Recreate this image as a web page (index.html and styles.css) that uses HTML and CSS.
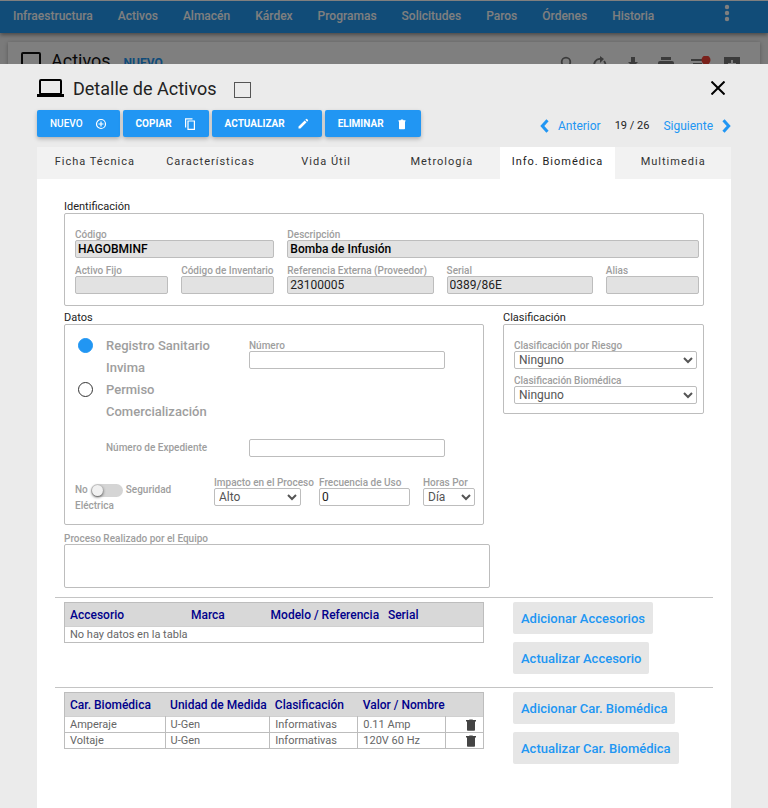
FILE: index.html
```html
<!DOCTYPE html>
<html lang="es">
<head>
<meta charset="utf-8">
<meta name="viewport" content="width=device-width, initial-scale=1">
<title>Detalle de Activos</title>
<link rel="stylesheet" href="styles.css">
</head>
<body>
<header class="navbar">
  <nav class="nav-links">
    <a href="#">Infraestructura</a>
    <a href="#">Activos</a>
    <a href="#">Almacén</a>
    <a href="#">Kárdex</a>
    <a href="#">Programas</a>
    <a href="#">Solicitudes</a>
    <a href="#">Paros</a>
    <a href="#">Órdenes</a>
    <a href="#">Historia</a>
  </nav>
  <button class="icon-button nav-more" type="button" aria-label="Más opciones">
    <svg width="6" height="18" viewBox="0 0 6 18" fill="currentColor"><circle cx="3" cy="3" r="2.2"/><circle cx="3" cy="9" r="2.2"/><circle cx="3" cy="15" r="2.2"/></svg>
  </button>
</header>
<main class="page-card">
  <div class="page-title">
    <svg width="28" height="20" viewBox="0 0 28 20"><rect x="2" y="2" width="18" height="14" rx="1" fill="none" stroke="currentColor" stroke-width="2"/><path d="M0 17h24v2H0z" fill="currentColor"/></svg>
    <h1>Activos</h1>
    <a href="#">NUEVO</a>
  </div>
  <div class="page-tools">
    <svg viewBox="0 0 16 16"><circle cx="7" cy="6" r="4.3" fill="none" stroke="currentColor" stroke-width="1.8"/><path d="M10 9l5 5" stroke="currentColor" stroke-width="2"/></svg>
    <svg viewBox="0 0 16 16"><path d="M3 12A6 6 0 0 1 9 3M12 5a6 6 0 0 1 1 6" fill="none" stroke="currentColor" stroke-width="1.8"/><path d="M8 0l4 3-4 4z" fill="currentColor"/></svg>
    <svg viewBox="0 0 16 16"><path d="M6 1h4v5h3l-5 5-5-5h3zM3 13h10v2H3z" fill="currentColor"/></svg>
    <svg viewBox="0 0 16 16"><path d="M3 1h10v3H3zM2 5h12a2 2 0 0 1 2 2v5h-3v3H3v-3H0V7a2 2 0 0 1 2-2z" fill="currentColor"/></svg>
    <svg viewBox="0 0 20 16" class="tool-wide"><path d="M0 3h11v2H0zM2 7h9v2H2zM4 11h6v2H4z" fill="currentColor"/><circle cx="15" cy="4" r="4.5" fill="#f44336"/></svg>
    <svg viewBox="0 0 16 16"><path fill-rule="evenodd" d="M0 1h16v14H0zM7 4v3H4v2h3v3h2V9h3V7H9V4z" fill="currentColor"/></svg>
  </div>
</main>
<div class="backdrop"></div>

<section class="sheet" role="dialog" aria-labelledby="sheet-title">
  <div class="sheet-head">
    <svg class="laptop" width="27" height="18" viewBox="0 0 27 18"><rect x="3" y="1" width="21" height="14" rx="1" fill="none" stroke="currentColor" stroke-width="2"/><path d="M0 15h27v3H0zM3 14h21v2H3z" fill="currentColor"/></svg>
    <h2 id="sheet-title">Detalle de Activos</h2>
    <input class="square" type="checkbox" aria-label="Seleccionar activo">
    <button class="icon-button close" type="button" aria-label="Cerrar">
      <svg width="14" height="14" viewBox="0 0 14 14" fill="none" stroke="currentColor" stroke-width="2"><path d="M.5.5l13 13M13.5.5l-13 13"/></svg>
    </button>
  </div>

  <div class="toolbar">
    <div class="actions">
      <button class="action light" type="button">NUEVO
        <svg viewBox="0 0 12 12" fill="none" stroke="currentColor"><circle cx="6" cy="6" r="4.5" stroke-width="1.2"/><path d="M6 3.5v5M3.5 6h5" stroke-width="1.2"/></svg></button>
      <button class="action" type="button">COPIAR
        <svg viewBox="0 0 12 12" fill="none" stroke="currentColor" stroke-width="1.2"><path d="M1.600 9.500V.8H8.500"/><path d="M4 3h6.400v8.400H4z"/></svg></button>
      <button class="action" type="button">ACTUALIZAR
        <svg viewBox="0 0 12 12" fill="currentColor"><path d="M1.500 8.600L7.700 2.400l1.900 1.900-6.200 6.200H1.500zM8.300 1.800l.9-.8a.6.6 0 0 1 .8 0l1 1a.6.6 0 0 1 0 .8l-.8.9z"/></svg></button>
      <button class="action" type="button">ELIMINAR
        <svg viewBox="0 0 12 12" fill="currentColor"><path d="M2.500 2.200H4.500L5 1.500h2l.5.700h2v1.300h-7zM3 3h6v7.500a.8.8 0 0 1-.8.8H3.800a.8.8 0 0 1-.8-.8z"/></svg></button>
    </div>
    <nav class="pager">
      <a href="#"><svg width="9" height="14" viewBox="0 0 9 14" fill="none" stroke="currentColor" stroke-width="3"><path d="M7.500 1.200L2.300 7l5.200 5.800"/></svg>Anterior</a>
      <span>19 / 26</span>
      <a href="#">Siguiente<svg width="9" height="14" viewBox="0 0 9 14" fill="none" stroke="currentColor" stroke-width="3"><path d="M1.500 1.200L6.700 7l-5.200 5.800"/></svg></a>
    </nav>
  </div>

  <nav class="tabs">
    <a href="#">Ficha Técnica</a>
    <a href="#">Características</a>
    <a href="#">Vida Útil</a>
    <a href="#">Metrología</a>
    <a href="#" class="active" aria-current="page">Info. Biomédica</a>
    <a href="#">Multimedia</a>
  </nav>

  <form class="panel">
    <section>
      <h3>Identificación</h3>
      <div class="box ident">
        <div class="field c4"><label for="codigo">Código</label><input class="filled strong" id="codigo" value="HAGOBMINF" readonly></div>
        <div class="field c8"><label for="descripcion">Descripción</label><input class="filled strong" id="descripcion" value="Bomba de Infusión" readonly></div>
        <div class="field c2"><label for="fijo">Activo Fijo</label><input class="filled" id="fijo" readonly></div>
        <div class="field c2"><label for="inventario">Código de Inventario</label><input class="filled" id="inventario" readonly></div>
        <div class="field c3"><label for="referencia">Referencia Externa (Proveedor)</label><input class="filled" id="referencia" value="23100005" readonly></div>
        <div class="field c3"><label for="serial">Serial</label><input class="filled" id="serial" value="0389/86E" readonly></div>
        <div class="field c2"><label for="alias">Alias</label><input class="filled" id="alias" readonly></div>
      </div>
    </section>

    <div class="split">
      <section>
        <h3>Datos</h3>
        <div class="box datos">
          <div class="permit">
            <div class="radios">
              <label><input type="radio" name="registro" checked><span>Registro Sanitario Invima</span></label>
              <label><input type="radio" name="registro"><span>Permiso Comercialización</span></label>
            </div>
            <div class="field"><label for="numero">Número</label><input id="numero"></div>
            <label class="side-label" for="expediente">Número de Expediente</label>
            <input id="expediente">
          </div>
          <div class="usage">
            <div class="toggle">
              <div class="toggle-row"><span>No</span><input id="seguridad" type="checkbox" role="switch"><label for="seguridad">Seguridad</label></div>
              <label for="seguridad">Eléctrica</label>
            </div>
            <div class="field"><label for="impacto">Impacto en el Proceso</label><select class="short" id="impacto"><option>Alto</option></select></div>
            <div class="field"><label for="frecuencia">Frecuencia de Uso</label><input id="frecuencia" value="0"></div>
            <div class="field"><label for="horas">Horas Por</label><select id="horas"><option>Día</option></select></div>
          </div>
        </div>
      </section>
      <section>
        <h3>Clasificación</h3>
        <div class="box clasif">
          <div class="field"><label for="riesgo">Clasificación por Riesgo</label><select id="riesgo"><option>Ninguno</option></select></div>
          <div class="field"><label for="biomedica">Clasificación Biomédica</label><select id="biomedica"><option>Ninguno</option></select></div>
        </div>
      </section>
    </div>

    <div class="field proceso"><label for="proceso">Proceso Realizado por el Equipo</label><textarea id="proceso"></textarea></div>

    <hr>
    <div class="split listing">
      <table class="plain">
        <thead><tr><th class="w29">Accesorio</th><th class="w19">Marca</th><th class="w28">Modelo / Referencia</th><th>Serial</th></tr></thead>
        <tbody><tr><td colspan="4">No hay datos en la tabla</td></tr></tbody>
      </table>
      <div class="links">
        <button type="button">Adicionar Accesorios</button>
        <button type="button">Actualizar Accesorio</button>
      </div>
    </div>

    <hr>
    <div class="split listing">
      <table>
        <thead><tr><th class="w24">Car. Biomédica</th><th class="w25">Unidad de Medida</th><th class="w21">Clasificación</th><th class="w21">Valor / Nombre</th><th></th></tr></thead>
        <tbody>
          <tr><td>Amperaje</td><td>U-Gen</td><td>Informativas</td><td>0.11 Amp</td><td class="trash"><button class="icon-button" type="button" aria-label="Eliminar Amperaje"><svg width="10" height="12" viewBox="0 0 10 12" fill="currentColor"><path d="M0 1h3l.5-.500h3L7 1h3v1.500H0zM1 2.500h8V11a.8.8 0 0 1-.8.8H1.800A.8.8 0 0 1 1 11z"/></svg></button></td></tr>
          <tr><td>Voltaje</td><td>U-Gen</td><td>Informativas</td><td>120V 60 Hz</td><td class="trash"><button class="icon-button" type="button" aria-label="Eliminar Voltaje"><svg width="10" height="12" viewBox="0 0 10 12" fill="currentColor"><path d="M0 1h3l.5-.500h3L7 1h3v1.500H0zM1 2.500h8V11a.8.8 0 0 1-.8.8H1.800A.8.8 0 0 1 1 11z"/></svg></button></td></tr>
        </tbody>
      </table>
      <div class="links">
        <button type="button">Adicionar Car. Biomédica</button>
        <button type="button">Actualizar Car. Biomédica</button>
      </div>
    </div>
  </form>
</section>
</body>
</html>
```
FILE: styles.css
```css
* { box-sizing: border-box; }

body {
  margin: 0;
  min-height: 100vh;
  background: #f4f4f4;
  font-family: Roboto, "Liberation Sans", sans-serif;
  font-size: 12px;
  color: #222;
  overflow: hidden;
}

a { color: inherit; text-decoration: none; }
h1, h2, h3 { margin: 0; font-weight: 400; }
button, input, select, textarea { font-family: inherit; margin: 0; }
svg { display: block; flex: none; }

.icon-button {
  display: inline-flex;
  padding: 0;
  border: 0;
  background: none;
  color: inherit;
}

/* Page behind the sheet */
.navbar {
  display: flex;
  justify-content: space-between;
  height: 33px;
  padding: 0 38px 0 13px;
  border-top: 1px solid #fff;
  background: #2399f0;
  box-shadow: 0 2px 4px rgba(0, 0, 0, .4);
  color: #fff;
}
.nav-links {
  display: flex;
  gap: 25px;
  line-height: 30px;
  font-weight: 500;
}
.nav-more { margin-top: 3px; align-self: flex-start; }

.page-card {
  display: flex;
  justify-content: space-between;
  margin: 9px 8px 0;
  padding: 9px 20px 0 12px;
  height: 200px;
  background: #fff;
  box-shadow: 0 1px 4px rgba(0, 0, 0, .3);
}
.page-title {
  display: flex;
  align-items: flex-start;
  color: #111;
}
.page-title h1 { margin-left: 3px; font-size: 18px; line-height: 20px; }
.page-title a { margin: 5px 0 0 13px; color: #2196f3; font-weight: 700; }
.page-tools { display: flex; gap: 17px; padding-top: 5px; color: #777; }
.page-tools svg { width: 16px; height: 16px; }
.page-tools .tool-wide { width: 20px; margin-right: -4px; }

.backdrop {
  position: fixed;
  inset: 0;
  background: rgba(0, 0, 0, .5);
}

/* Sheet */
.sheet {
  position: fixed;
  inset: 64px 0 0;
  display: flex;
  flex-direction: column;
  padding: 9px 37px 0;
  background: #ebebeb;
  overflow: hidden;
}
.sheet-head {
  display: flex;
  align-items: center;
  height: 30px;
  color: #000;
}
.sheet-head h2 {
  margin: 0 17px 0 9px;
  font-size: 18px;
  color: #222;
}
.square {
  appearance: none;
  width: 17px;
  height: 16px;
  margin-top: 3px;
  border: 1px solid #555;
}
.close { margin-left: auto; margin-right: 6px; }

.toolbar {
  display: flex;
  justify-content: space-between;
  padding: 7px 0 10px;
}
.actions { display: flex; gap: 3px; }
.action {
  display: flex;
  align-items: center;
  gap: 12px;
  height: 27px;
  padding: 0 13px;
  border: 0;
  border-radius: 2px;
  background: #2196f3;
  box-shadow: 0 2px 4px rgba(0, 0, 0, .25);
  color: #fff;
  font-size: 10px;
  font-weight: 700;
}
.action.light { font-weight: 500; }
.action svg { width: 12px; height: 12px; }
.pager {
  display: flex;
  align-items: center;
  gap: 14px;
  padding-top: 4px;
}
.pager a { display: flex; align-items: center; gap: 9px; color: #2196f3; }
.pager span { font-size: 11px; }

.tabs {
  display: grid;
  grid-template-columns: repeat(6, 1fr);
  background: #f2f2f2;
  font-size: 11px;
  line-height: 30px;
  text-align: center;
  letter-spacing: 1px;
  color: #333;
}
.tabs a { height: 32px; }
.tabs .active { background: #fff; color: #222; }

.panel {
  flex: 1;
  padding: 20px 27px;
  background: #fff;
}
.panel h3 { padding-top: 2px; font-size: 11px; line-height: 12px; }
.box { border: 1px solid #bdbdbd; border-radius: 2px; }

.field { display: flex; flex-direction: column; min-width: 0; }
.field label, .side-label, .toggle {
  font-size: 10px;
  font-weight: 500;
  line-height: 10px;
  color: #9e9e9e;
  white-space: nowrap;
}
.field input, .permit > input, select, textarea {
  width: 100%;
  height: 18px;
  border: 1px solid #bdbdbd;
  border-radius: 2px;
  background-color: #fff;
  padding: 0 2px;
  font-size: 12px;
  color: #222;
}
.field select { padding: 0; color: #555; }
.field .filled { background: #e2e2e2; }
.field .strong { font-weight: 500; color: #000; }

.ident {
  display: grid;
  grid-template-columns: repeat(12, 1fr);
  gap: 8px 13px;
  padding: 16px 4px 11px 10px;
}
.c2 { grid-column: span 2; }
.c3 { grid-column: span 3; }
.c4 { grid-column: span 4; }
.c8 { grid-column: span 8; }

.split {
  display: grid;
  grid-template-columns: 420fr 201fr;
  column-gap: 19px;
  align-items: start;
}
.split > section { margin-top: 4px; }

.datos { padding: 10px 8px 17px 10px; }
.permit {
  display: grid;
  grid-template-columns: 120px 1fr;
  column-gap: 23px;
  padding: 0 30px 0 31px;
}
.permit .field { padding-top: 6px; }
.radios { margin-left: -31px; }
.radios label {
  display: flex;
  gap: 13px;
  font-size: 13px;
  font-weight: 500;
  line-height: 22px;
  color: #9e9e9e;
}
.radios input {
  appearance: none;
  flex: none;
  width: 15px;
  height: 15px;
  margin: 3px 0 0 3px;
  border: 1px solid #333;
  border-radius: 50%;
}
.radios input:checked { border-color: #2196f3; background: #2196f3; }
.side-label { grid-column: 1; margin-top: 16px; line-height: 18px; }
.permit > input { margin-top: 16px; }

.usage {
  display: grid;
  grid-template-columns: 1fr 92px 91px 52px;
  column-gap: 13px;
  padding-top: 21px;
}
.usage .short { width: 87px; }
.toggle { height: 29px; line-height: 16px; padding-top: 4px; }
.toggle label { display: block; }
.toggle-row { display: flex; align-items: center; gap: 3px; }
.toggle input {
  appearance: none;
  display: flex;
  align-items: center;
  width: 32px;
  height: 13px;
  border-radius: 7px;
  background: #d5d5d5;
}
.toggle input::before {
  content: "";
  width: 11px;
  height: 11px;
  margin-left: 1px;
  border-radius: 50%;
  background: #f1f1f1;
  box-shadow: 0 1px 3px rgba(0, 0, 0, .7);
}

.clasif {
  display: grid;
  gap: 7px;
  padding: 16px 6px 9px 10px;
}

.proceso { margin-top: 9px; width: 66.6%; }
.proceso textarea { height: 44px; resize: none; }

hr {
  height: 1px;
  margin: 9px -9px 4px;
  border: 0;
  background: #c4c4c4;
}

/* Lists */
table {
  width: 100%;
  table-layout: fixed;
  border-collapse: collapse;
  border: 1px solid #bdbdbd;
}
th {
  height: 24px;
  padding: 0 0 0 5px;
  background: #d8d8d8;
  text-align: left;
  font-size: 12px;
  font-weight: 500;
  white-space: nowrap;
  color: #00008b;
}
td {
  height: 16px;
  padding: 0 0 0 5px;
  border: 1px solid #bdbdbd;
  border-top-color: #d0d0d0;
  font-size: 11px;
  line-height: 15px;
  color: #666;
}
.trash { padding-right: 7px; text-align: right; color: #444; }
.trash .icon-button { vertical-align: middle; }
.w19 { width: 19%; }
.w21 { width: 21%; }
.w24 { width: 24%; }
.w25 { width: 25%; }
.w28 { width: 28%; }
.w29 { width: 29%; }
.listing { column-gap: 29px; grid-template-columns: 420fr 191fr; }
.links {
  display: flex;
  flex-direction: column;
  align-items: flex-start;
  gap: 8px;
  padding-bottom: 4px;
}
.links button {
  height: 32px;
  padding: 0 8px;
  border: 0;
  border-radius: 2px;
  background: #e6e6e6;
  color: #2196f3;
  font-size: 13px;
  font-weight: 500;
  white-space: nowrap;
}
```
